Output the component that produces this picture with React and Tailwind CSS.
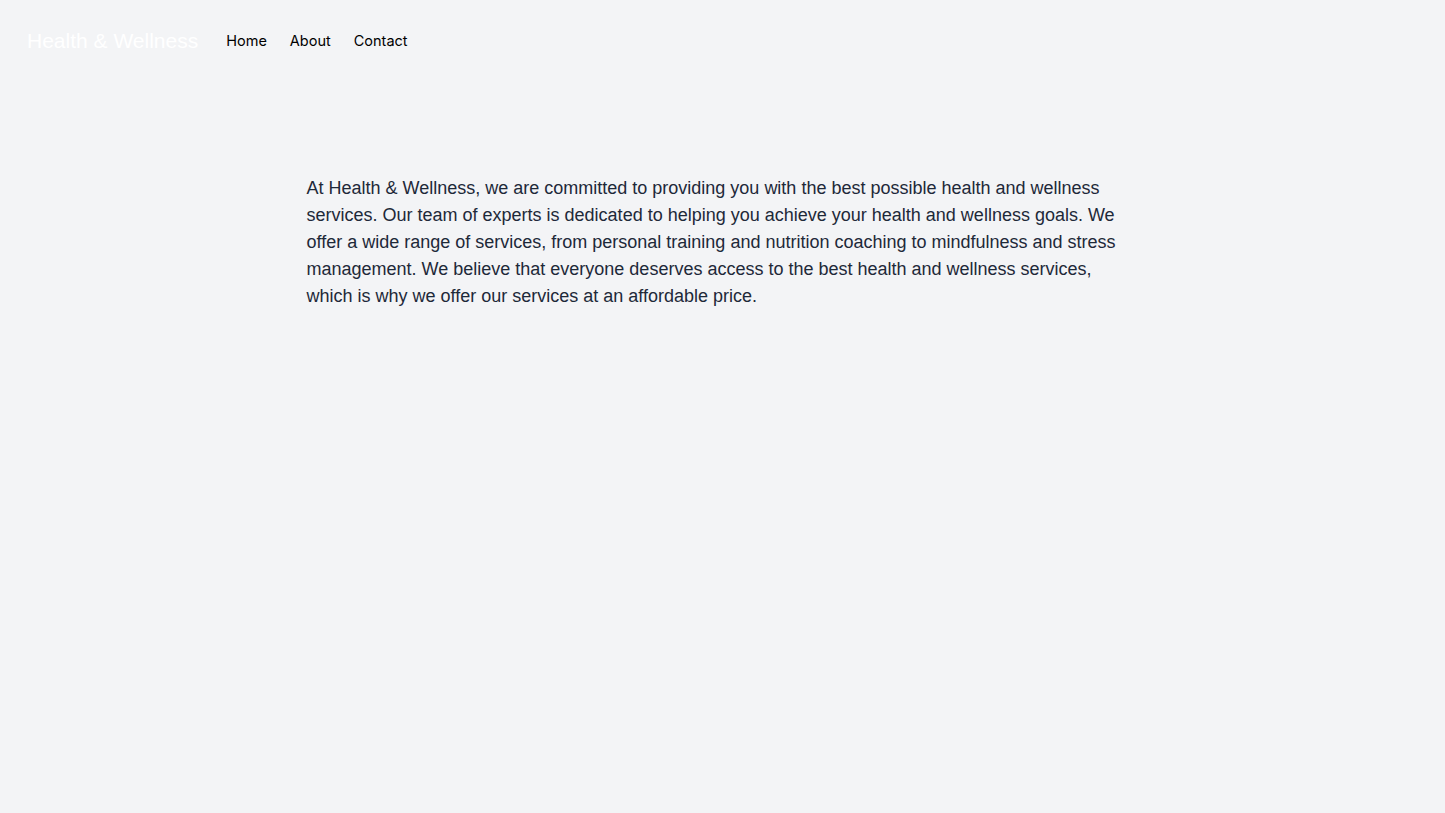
import React from "react";

const links = ["Home", "About", "Contact"];

function Header() {
  return (
    <header className="flex items-center px-[27px] pt-[27px] pb-6">
      <a href="#" className="mr-7 font-['Liberation_Sans',Arial,sans-serif] text-[21px] leading-7 text-white">
        Health &amp; Wellness
      </a>
      <nav className="flex gap-[23px] font-['Inter',sans-serif] text-[14.5px] text-black">
        {links.map((l) => (
          <a key={l} href="#">
            {l}
          </a>
        ))}
      </nav>
    </header>
  );
}

export default function App() {
  return (
    <div className="min-h-screen bg-gray-100">
      <Header />
      <main className="mx-auto max-w-4xl px-8 pt-[96px] pb-24">
        <p className="font-['Liberation_Sans',Arial,sans-serif] text-lg leading-[27px] text-gray-800">
          At Health &amp; Wellness, we are committed to providing you with the best possible
          health and wellness services. Our team of experts is dedicated to helping you achieve
          your health and wellness goals. We offer a wide range of services, from personal
          training and nutrition coaching to mindfulness and stress management. We believe that
          everyone deserves access to the best health and wellness services, which is why we
          offer our services at an affordable price.
        </p>
      </main>
    </div>
  );
}
